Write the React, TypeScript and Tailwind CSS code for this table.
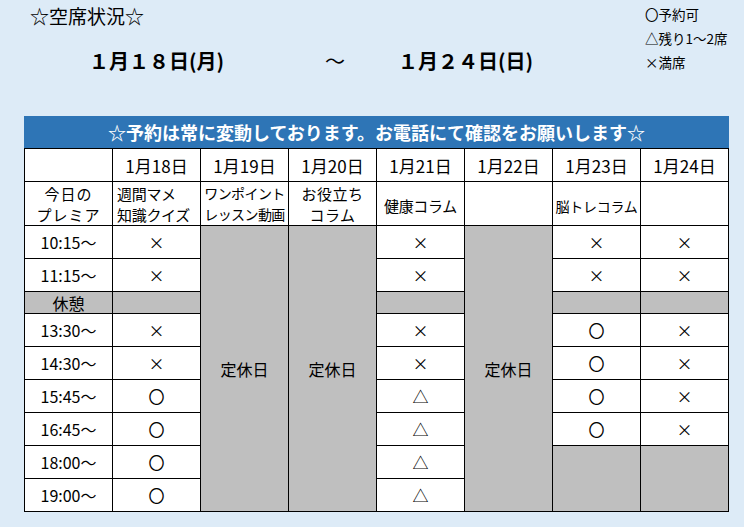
import React from "react";

const Cell = ({
  c,
  r,
  span = 1,
  gray = false,
  children,
  className = "text-[16px] leading-none",
}: {
  c: string;
  r: string;
  span?: number;
  gray?: boolean;
  children?: React.ReactNode;
  className?: string;
}) => {
  const spanCls =
    span === 9 ? "row-span-9" : span === 2 ? "row-span-2" : "row-span-1";
  return (
    <div
      className={`${c} ${r} ${spanCls} ${
        gray ? "bg-[#bfbfbf]" : "bg-white"
      } flex text-black whitespace-nowrap ${className}`}
    >
      {children}
    </div>
  );
};

const rowCls = [
  "",
  "row-start-1",
  "row-start-2",
  "row-start-3",
  "row-start-4",
  "row-start-5",
  "row-start-6",
  "row-start-7",
  "row-start-8",
  "row-start-9",
  "row-start-10",
  "row-start-11",
];
const colCls = [
  "",
  "col-start-1",
  "col-start-2",
  "col-start-3",
  "col-start-4",
  "col-start-5",
  "col-start-6",
  "col-start-7",
  "col-start-8",
];

const cols: Record<number, (string | null)[]> = {
  2: ["×", "×", null, "×", "×", "〇", "〇", "〇", "〇"],
  5: ["×", "×", null, "×", "×", "△", "△", "△", "△"],
  7: ["×", "×", null, "〇", "〇", "〇", "〇", "G2", "skip"],
  8: ["×", "×", null, "×", "×", "×", "×", "G2", "skip"],
};

const times = ["10:15～", "11:15～", "休憩", "13:30～", "14:30～", "15:45～", "16:45～", "18:00～", "19:00～"];

const C = "items-center justify-center text-[16px] leading-none";

export default function App() {
  return (
    <div className="w-[744px] h-[527px] bg-[#ddebf7] font-['Noto_Sans_CJK_JP',sans-serif] text-black overflow-hidden">
      <div className="h-[116px] flex">
        <div className="flex-1 flex flex-col">
          <div className="pl-[30px] pt-[6px] text-[19px] leading-none">☆空席状況☆</div>
          <div className="flex pl-[89px] pt-[26px] text-[20px] leading-none font-bold">
            <div className="w-[236px]">１月１８日(月)</div>
            <div className="w-[73px] font-normal">～</div>
            <div>１月２４日(日)</div>
          </div>
        </div>
        <div className="w-[99px] pt-[7px] flex flex-col gap-[10px] text-[13.5px] leading-[14px]">
          <div>〇予約可</div>
          <div>△残り1～2席</div>
          <div>×満席</div>
        </div>
      </div>
      <div className="ml-[24px] w-[705px]">
        <div className="h-[32px] bg-[#2e75b6] text-white text-[18px] font-bold flex items-center justify-center leading-none">
          ☆予約は常に変動しております。お電話にて確認をお願いします☆
        </div>
        <div className="grid grid-cols-[repeat(8,87px)] grid-rows-[32px_43px_32px_32px_21px_32px_32px_32px_32px_32px_32px] gap-px bg-black border border-black">
          <Cell c="col-start-1" r="row-start-1" />
          {["1月18日", "1月19日", "1月20日", "1月21日", "1月22日", "1月23日", "1月24日"].map((d, i) => (
            <Cell key={d} c={colCls[i + 2]} r="row-start-1" className="items-center justify-center text-[17px] leading-none">
              {d}
            </Cell>
          ))}
          <Cell c="col-start-1" r="row-start-2" className="flex-col items-center justify-center leading-[21px] text-[15px] tracking-[1px]">
            <span>今日の</span>
            <span>プレミア</span>
          </Cell>
          <Cell c="col-start-2" r="row-start-2" className="flex-col items-start justify-center pl-[4px] leading-[21px] text-[15px] tracking-[-0.3px]">
            <span>週間マメ</span>
            <span>知識クイズ</span>
          </Cell>
          <Cell c="col-start-3" r="row-start-2" className="flex-col items-center justify-center leading-[21px] text-[14px] tracking-[-0.6px]">
            <span>ワンポイント</span>
            <span>レッスン動画</span>
          </Cell>
          <Cell c="col-start-4" r="row-start-2" className="flex-col items-center justify-center leading-[21px] text-[15px] tracking-[0.5px]">
            <span>お役立ち</span>
            <span>コラム</span>
          </Cell>
          <Cell c="col-start-5" r="row-start-2" className="items-center justify-center pt-[4px] text-[15px] leading-none tracking-[-0.3px]">
            健康コラム
          </Cell>
          <Cell c="col-start-6" r="row-start-2" />
          <Cell c="col-start-7" r="row-start-2" className="items-center justify-center pt-[4px] text-[14px] leading-none tracking-[-0.3px]">
            脳トレコラム
          </Cell>
          <Cell c="col-start-8" r="row-start-2" />

          {times.map((t, i) => (
            <Cell key={t} c="col-start-1" r={rowCls[i + 3]} gray={t === "休憩"} className={C}>
              {t}
            </Cell>
          ))}

          {[3, 4, 6].map((c) => (
            <Cell key={c} c={colCls[c]} r="row-start-3" span={9} gray className={C}>
              定休日
            </Cell>
          ))}

          {Object.entries(cols).map(([c, vals]) =>
            vals.map((v, i) => {
              if (v === "skip") return null;
              if (v === null)
                return <Cell key={`${c}-${i}`} c={colCls[Number(c)]} r={rowCls[i + 3]} gray />;
              if (v === "G2")
                return <Cell key={`${c}-${i}`} c={colCls[Number(c)]} r={rowCls[i + 3]} span={2} gray />;
              return (
                <Cell key={`${c}-${i}`} c={colCls[Number(c)]} r={rowCls[i + 3]} className={C}>
                  {v}
                </Cell>
              );
            })
          )}
        </div>
      </div>
    </div>
  );
}
